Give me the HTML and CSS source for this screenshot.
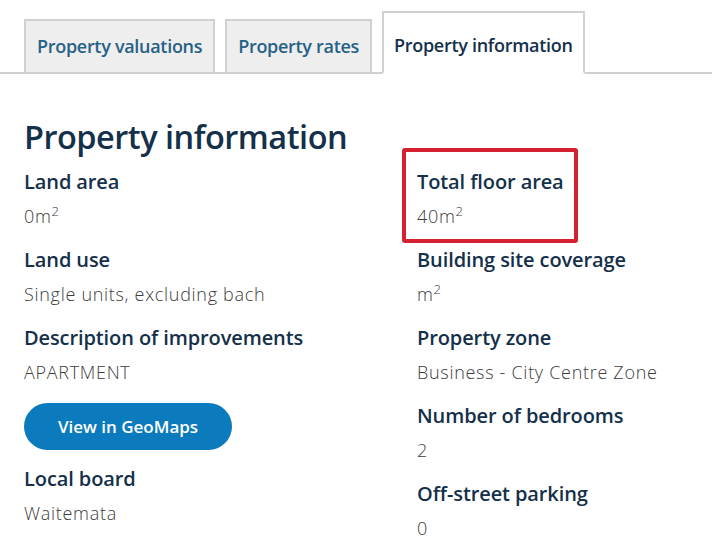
FILE: index.html
```html
<!DOCTYPE html>
<html lang="en">
    <head>
        <meta charset="UTF-8">
        <meta name="viewport" content="width=device-width, initial-scale=1.0">
        <title>Property information</title>
        <link rel="stylesheet" href="styles.css">
    </head>
    <body>
        <div class="tabs">
            <a class="tab" href="#">Property valuations</a>
            <a class="tab" href="#">Property rates</a>
            <a class="tab active" href="#">Property information</a>
        </div>

        <div class="content">
            <h1>Property information</h1>
            <div class="columns">
                <div class="column">
                    <div class="item">
                        <div class="label">Land area</div>
                        <div class="value">0m<sup>2</sup></div>
                    </div>
                    <div class="item">
                        <div class="label">Land use</div>
                        <div class="value">Single units, excluding bach</div>
                    </div>
                    <div class="item">
                        <div class="label">Description of improvements</div>
                        <div class="value">APARTMENT</div>
                    </div>
                    <a class="map-btn" href="#">View in GeoMaps</a>
                    <div class="item">
                        <div class="label">Local board</div>
                        <div class="value">Waitemata</div>
                    </div>
                </div>

                <div class="column">
                    <div class="item highlight">
                        <div class="label">Total floor area</div>
                        <div class="value">40m<sup>2</sup></div>
                    </div>
                    <div class="item">
                        <div class="label">Building site coverage</div>
                        <div class="value">m<sup>2</sup></div>
                    </div>
                    <div class="item">
                        <div class="label">Property zone</div>
                        <div class="value">Business - City Centre Zone</div>
                    </div>
                    <div class="item">
                        <div class="label">Number of bedrooms</div>
                        <div class="value">2</div>
                    </div>
                    <div class="item">
                        <div class="label">Off-street parking</div>
                        <div class="value">0</div>
                    </div>
                </div>
            </div>
        </div>
    </body>
</html>
```

FILE: styles.css
```css
body {
    margin: 0;
    font-family: "Open Sans", "Liberation Sans", sans-serif;
    background-color: #ffffff;
    color: #14304a;
}
.tabs {
    display: flex;
    align-items: flex-end;
    gap: 10px;
    margin-top: 11px;
    padding-left: 24px;
    border-bottom: 2px solid #d0d0d0;
}
.tab {
    display: block;
    height: 51px;
    line-height: 51px;
    padding: 0 11px;
    margin-bottom: -2px;
    border: 2px solid #d0d0d0;
    background-color: #eeeeee;
    color: #266186;
    font-size: 18px;
    font-weight: 600;
    text-decoration: none;
    letter-spacing: -0.3px;
}
.tab.active {
    height: 59px;
    line-height: 64px;
    padding: 0 10px;
    background-color: #ffffff;
    border-bottom-color: #ffffff;
    color: #14304a;
}
.content {
    padding: 0 24px;
}
h1 {
    margin: 43px 0 12px;
    font-size: 32.5px;
    line-height: 40px;
    font-weight: 600;
    letter-spacing: -0.5px;
}
.columns {
    display: grid;
    grid-template-columns: 393px 1fr;
}
.item {
    margin-bottom: 18px;
}
.label {
    font-size: 20px;
    line-height: 26px;
    font-weight: 600;
    letter-spacing: -0.1px;
    margin-bottom: 8px;
}
.value {
    font-size: 18px;
    line-height: 26px;
    font-weight: 300;
    letter-spacing: 0.7px;
    color: #3c3c3c;
}
.value sup {
    font-size: 13px;
    line-height: 0;
}
.highlight {
    position: relative;
}
.highlight::after {
    content: "";
    position: absolute;
    top: -21px;
    left: -15px;
    width: 176px;
    bottom: -14px;
    box-sizing: border-box;
    border: 4px solid #d3212f;
    border-radius: 3px;
}
.map-btn {
    display: block;
    width: 208px;
    height: 47px;
    line-height: 47px;
    margin: 1px 0 16px;
    border-radius: 24px;
    background-color: #0b7bbd;
    color: #ffffff;
    text-align: center;
    font-size: 17px;
    font-weight: 600;
    text-decoration: none;
}
```
